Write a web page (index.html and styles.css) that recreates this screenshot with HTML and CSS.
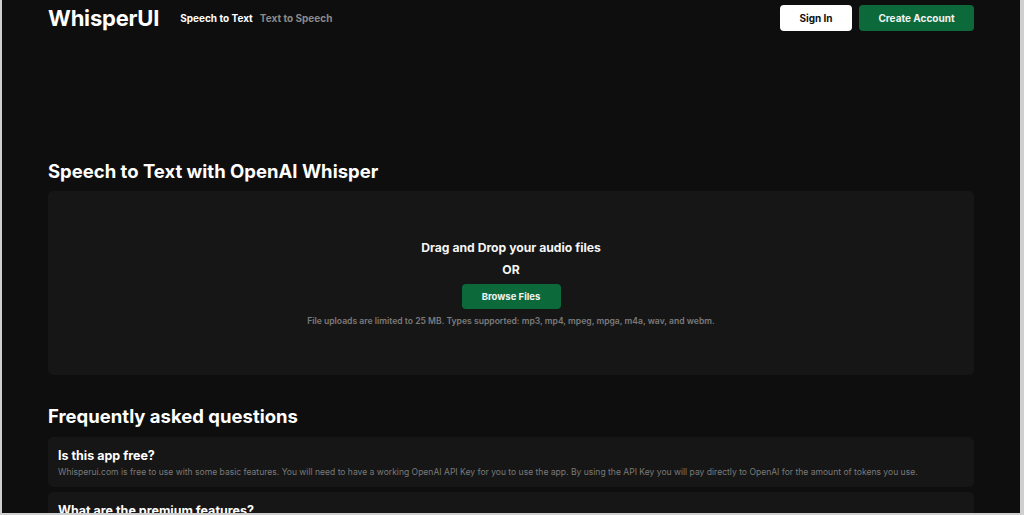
FILE: index.html
```html
<!DOCTYPE html>
<html lang="en">

<head>
    <meta charset="UTF-8">
    <title>WhisperUI</title>
    <link rel="stylesheet" href="styles.css">
</head>

<body>
    <div class="page">
        <header class="topbar">
            <div class="brand">
                <a class="logo" href="#">WhisperUI</a>
                <nav class="nav">
                    <a class="nav-link active" href="#">Speech to Text</a>
                    <a class="nav-link" href="#">Text to Speech</a>
                </nav>
            </div>
            <div class="actions">
                <button class="btn btn-light">Sign In</button>
                <button class="btn btn-green btn-wide">Create Account</button>
            </div>
        </header>

        <main class="main">
            <h1 class="title">Speech to Text with OpenAI Whisper</h1>
            <section class="dropzone">
                <p class="drop-text">Drag and Drop your audio files</p>
                <p class="or">OR</p>
                <button class="btn btn-green btn-browse">Browse Files</button>
                <p class="hint">File uploads are limited to 25 MB. Types supported: mp3, mp4, mpeg, mpga, m4a, wav, and webm.</p>
            </section>

            <h2 class="title faq-title">Frequently asked questions</h2>
            <div class="faq">
                <div class="faq-item">
                    <h3 class="question">Is this app free?</h3>
                    <p class="answer">Whisperui.com is free to use with some basic features. You will need to have a working OpenAI API Key for you to use the app. By using the API Key you will pay directly to OpenAI for the amount of tokens you use.</p>
                </div>
                <div class="faq-item">
                    <h3 class="question">What are the premium features?</h3>
                    <p class="answer">Premium users get longer uploads, saved transcripts and faster processing.</p>
                </div>
            </div>
        </main>
    </div>
</body>

</html>
```

FILE: styles.css
```css
html {
    background: #cfcfcf;
}

body {
    margin: 0 4px 0 2px;
    background: #0e0e0e;
    font-family: Inter, "Noto Sans", sans-serif;
    color: #f4f4f4;
    height: 513px;
    overflow: hidden;
}

.page {
    width: 926px;
    margin: 0 auto;
}

.topbar {
    height: 36px;
    display: flex;
    align-items: center;
    justify-content: space-between;
}

.brand {
    display: flex;
    align-items: center;
    gap: 21px;
}

.logo {
    font-size: 22px;
    font-weight: 700;
    color: #fff;
    text-decoration: none;
    letter-spacing: -0.2px;
}

.nav {
    display: flex;
    gap: 7px;
}

.nav-link {
    font-size: 10px;
    font-weight: 700;
    color: #8a8a8a;
    text-decoration: none;
}

.nav-link.active {
    color: #fff;
}

.actions {
    display: flex;
    gap: 7px;
}

.btn {
    border: none;
    border-radius: 4px;
    height: 26px;
    font-family: inherit;
    font-size: 10px;
    font-weight: 700;
    cursor: pointer;
}

.btn-light {
    width: 72px;
    background: #fff;
    color: #111;
}

.btn-green {
    background: #0c6a3a;
    color: #f2f2f2;
}

.btn-wide {
    width: 115px;
}

.main {
    padding-top: 123px;
}

.title {
    margin: 0 0 8px;
    font-size: 18.5px;
    font-weight: 700;
    line-height: 24px;
    color: #fff;
}

.dropzone {
    background: #161616;
    border-radius: 5px;
    height: 184px;
    box-sizing: border-box;
    padding-top: 49px;
    display: flex;
    flex-direction: column;
    align-items: center;
}

.drop-text {
    margin: 0;
    font-size: 12.2px;
    font-weight: 700;
    line-height: 16px;
}

.or {
    margin: 6px 0 0;
    font-size: 12.2px;
    font-weight: 700;
    line-height: 16px;
}

.btn-browse {
    margin-top: 6px;
    width: 99px;
    height: 25px;
    font-size: 9.5px;
}

.hint {
    margin: 7px 0 0;
    font-size: 8.6px;
    font-weight: 600;
    color: #7b7b7b;
    line-height: 10px;
}

.faq-title {
    margin-top: 29px;
    margin-bottom: 9px;
}

.faq {
    display: flex;
    flex-direction: column;
    gap: 5px;
}

.faq-item {
    background: #161616;
    border-radius: 5px;
    padding: 11px 10px 9px;
}

.question {
    margin: 0;
    font-size: 12.5px;
    font-weight: 700;
    line-height: 16px;
    color: #fff;
}

.answer {
    margin: 2px 0 0;
    font-size: 8.55px;
    color: #7a7a7a;
    line-height: 12px;
}
```
